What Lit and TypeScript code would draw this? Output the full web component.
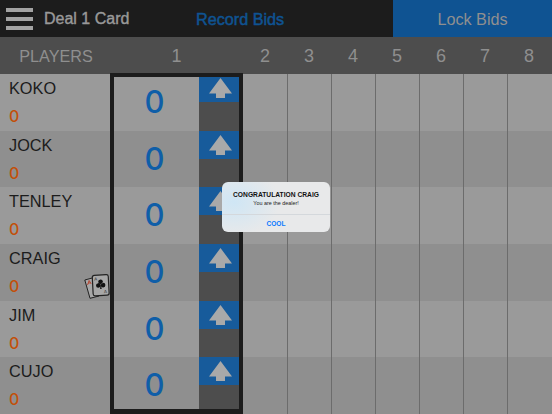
import { LitElement, html, css } from "lit";
import { customElement } from "lit/decorators.js";

const PLAYERS = ["KOKO", "JOCK", "TENLEY", "CRAIG", "JIM", "CUJO"];
const ROUNDS = [2, 3, 4, 5, 6, 7, 8];

@customElement("app-root")
export class AppRoot extends LitElement {
  static styles = css`
    :host {
      display: block;
      width: 552px;
      height: 414px;
      overflow: hidden;
      position: relative;
      font-family: "Liberation Sans", Arial, sans-serif;
      background: #9a9a9a;
    }
    .top {
      height: 37px;
      display: flex;
      background: #1c1c1c;
    }
    .burger {
      width: 27px;
      margin: 8px 0 0 6px;
      display: flex;
      flex-direction: column;
      gap: 5px;
    }
    .burger i {
      display: block;
      height: 4px;
      background: #a3a3a3;
    }
    .deal {
      width: 152px;
      margin-left: 11px;
      font-size: 16px;
      line-height: 38px;
      color: #999;
      -webkit-text-stroke: 0.4px #999;
    }
    .record {
      font-size: 16.2px;
      line-height: 38px;
      color: #0f5392;
      white-space: nowrap;
      -webkit-text-stroke: 0.5px #0f5392;
    }
    .lock {
      margin-left: auto;
      width: 159px;
      background: #0f5392;
      color: #8f8f8f;
      font-size: 16.2px;
      line-height: 38px;
      text-align: center;
    }
    .header {
      height: 37px;
      display: flex;
      background: #4d4d4d;
      color: #8f8f8f;
      font-size: 18px;
      line-height: 38px;
      text-align: center;
    }
    .header .name {
      width: 110px;
      font-size: 16.2px;
      padding-left: 2px;
      box-sizing: border-box;
    }
    .header .cur {
      width: 133px;
    }
    .header .n {
      width: 44px;
    }
    .body {
      height: 340px;
      display: flex;
      position: relative;
    }
    .players {
      width: 110px;
      display: flex;
      flex-direction: column;
    }
    .player {
      flex: 1;
      box-sizing: border-box;
      padding: 3px 0 0 9px;
      position: relative;
      background: #9a9a9a;
    }
    .player:nth-child(even),
    .cell:nth-child(even),
    .rowband:nth-child(even) {
      background: #8f8f8f;
    }
    .player .nm {
      font-size: 16.3px;
      line-height: 22px;
      color: #1c1c1c;
    }
    .player .sc {
      font-family: Inter, "Liberation Sans", sans-serif;
      font-weight: 500;
      font-size: 16px;
      line-height: 21px;
      margin-top: 7px;
      color: #c2500a;
    }
    .cards {
      position: absolute;
      left: 84px;
      top: 29px;
      width: 26px;
      height: 26px;
    }
    .cur-col {
      width: 133px;
      box-sizing: border-box;
      padding: 0 4px;
      display: flex;
      flex-direction: column;
      position: relative;
    }
    .frame {
      position: absolute;
      left: 0;
      right: 0;
      top: -1px;
      bottom: 0;
      box-sizing: border-box;
      border: 4px solid #1c1c1c;
      border-bottom-width: 5px;
    }
    .cell {
      flex: 1;
      display: flex;
      background: #9a9a9a;
    }
    .cell .val {
      width: 81px;
      text-align: center;
      font-family: Inter, "Liberation Sans", sans-serif;
      font-weight: 500;
      font-size: 31px;
      line-height: 56px;
      color: #0f5ea8;
      padding-right: 4px;
    }
    .cell .side {
      width: 40px;
      background: #4d4d4d;
    }
    .arrow {
      height: 28px;
      background: #175b9b;
      display: flex;
      padding: 4px 0 0 10px;
      box-sizing: border-box;
    }
    .grid {
      flex: 1;
      position: relative;
      display: flex;
      flex-direction: column;
    }
    .rowband {
      flex: 1;
      background: #9a9a9a;
    }
    .lines {
      position: absolute;
      inset: 0;
      display: flex;
    }
    .lines div {
      width: 44.1px;
      flex: none;
      box-sizing: border-box;
      border-right: 1px solid #6c6c6c;
    }
    .lines div:first-child {
      width: 45px;
    }
    .alert {
      position: absolute;
      left: 222px;
      top: 182px;
      width: 108px;
      height: 50px;
      border-radius: 6px;
      background:
        radial-gradient(ellipse 46px 34px at 12px 20px, #cfe6f5 0%, rgba(207, 230, 245, 0) 100%),
        #e8e9ea;
      text-align: center;
      color: #111;
      overflow: hidden;
    }
    .alert .t {
      font-size: 6.7px;
      font-weight: 700;
      line-height: 9px;
      margin-top: 8px;
    }
    .alert .m {
      font-size: 5.4px;
      line-height: 8px;
      color: #222;
    }
    .alert .b {
      margin-top: 7px;
      border-top: 1px solid #d4d8dc;
      font-size: 6.6px;
      font-weight: 700;
      line-height: 17px;
      color: #0a7aff;
    }
  `;

  private arrowIcon() {
    return html`<svg width="23" height="20" viewBox="0 0 23 20">
      <path d="M11.500 0 L23 15.500 L16 15.500 L16 20 L7 20 L7 15.500 L0 15.500 Z" fill="#a9a9a9" />
    </svg>`;
  }

  private cardsIcon() {
    return html`<svg width="26" height="26" viewBox="0 0 26 26">
      <path d="M0.800 7 L10 4.500 L15 23 L6 25.300 Z" fill="#a8a8a8" stroke="#222" stroke-width="1" stroke-linejoin="round" />
      <path d="M3.500 12 L5.100 7.500 L7.200 11 M4.100 10.300 L6.500 9.700" fill="none" stroke="#b5402a" stroke-width="0.900" />
      <g transform="rotate(-3 16.700 12)">
        <rect x="8.700" y="2" width="16" height="20.500" rx="2" fill="#a8a8a8" stroke="#222" stroke-width="1.200" />
        <text x="10.500" y="7.500" font-size="4.500" fill="#333" font-family="Liberation Sans">A</text>
        <text x="19.500" y="20.500" font-size="4.500" fill="#333" font-family="Liberation Sans">A</text>
        <circle cx="16.700" cy="8.700" r="2.300" fill="#111" />
        <circle cx="14.300" cy="12.300" r="2.300" fill="#111" />
        <circle cx="19.100" cy="12.300" r="2.300" fill="#111" />
        <path d="M16.700 10 L17.500 16 L15.900 16 Z" fill="#111" />
      </g>
    </svg>`;
  }

  render() {
    return html`
      <div class="top">
        <div class="burger"><i></i><i></i><i></i></div>
        <div class="deal">Deal 1 Card</div>
        <div class="record">Record Bids</div>
        <div class="lock">Lock Bids</div>
      </div>
      <div class="header">
        <div class="name">PLAYERS</div>
        <div class="cur">1</div>
        ${ROUNDS.map((n) => html`<div class="n">${n}</div>`)}
      </div>
      <div class="body">
        <div class="players">
          ${PLAYERS.map(
            (p) => html`<div class="player">
              <div class="nm">${p}</div>
              <div class="sc">0</div>
              ${p === "CRAIG" ? html`<div class="cards">${this.cardsIcon()}</div>` : ""}
            </div>`
          )}
        </div>
        <div class="cur-col">
          ${PLAYERS.map(
            () => html`<div class="cell">
              <div class="val">0</div>
              <div class="side"><div class="arrow">${this.arrowIcon()}</div></div>
            </div>`
          )}
          <div class="frame"></div>
        </div>
        <div class="grid">
          ${PLAYERS.map(() => html`<div class="rowband"></div>`)}
          <div class="lines">${ROUNDS.map(() => html`<div></div>`)}</div>
        </div>
      </div>
      <div class="alert">
        <div class="t">CONGRATULATION CRAIG</div>
        <div class="m">You are the dealer!</div>
        <div class="b">COOL</div>
      </div>
    `;
  }
}
